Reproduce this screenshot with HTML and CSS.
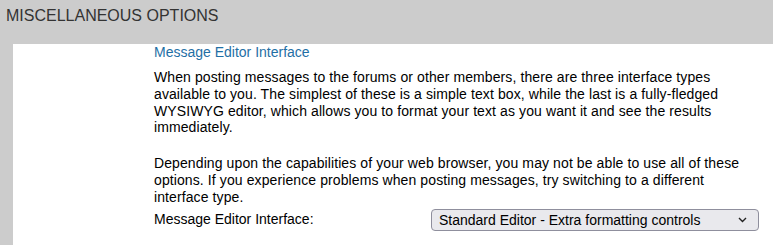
FILE: index.html
```html
<!DOCTYPE html>
<html lang="en">
<head>
    <meta charset="UTF-8">
    <title>Miscellaneous Options</title>
    <link rel="stylesheet" href="styles.css">
</head>
<body>
<div class="section-head">MISCELLANEOUS OPTIONS</div>
<div class="section-body">
    <div class="option">
        <div class="option-title">Message Editor Interface</div>
        <p class="option-desc">When posting messages to the forums or other members, there are three interface types available to you. The simplest of these is a simple text box, while the last is a fully-fledged WYSIWYG editor, which allows you to format your text as you want it and see the results immediately.</p>
        <p class="option-desc">Depending upon the capabilities of your web browser, you may not be able to use all of these options. If you experience problems when posting messages, try switching to a different interface type.</p>
        <div class="option-row">
            <label for="editor">Message Editor Interface:</label>
            <span class="select-wrap">
                <select id="editor" name="editor">
                    <option>Basic Editor - Simple text box</option>
                    <option selected>Standard Editor - Extra formatting controls</option>
                    <option>Enhanced Interface - Full WYSIWYG editing</option>
                </select>
                <svg class="select-arrow" width="9" height="6" viewBox="0 0 9 6">
                    <path d="M1 1 L4.5 4.5 L8 1" fill="none" stroke="#222" stroke-width="1.4"/>
                </svg>
            </span>
        </div>
    </div>
</div>
</body>
</html>
```

FILE: styles.css
```css
body {
    background-color: #cccccc;
    color: #000000;
    font-family: "Liberation Sans", Arial, sans-serif;
    font-size: 14px;
    margin: 0;
}

.section-head {
    color: #333333;
    font-size: 16px;
    padding: 7px 6px 0 6px;
    height: 44px;
    box-sizing: border-box;
}

.section-body {
    background-color: #ffffff;
    margin-left: 13px;
    padding: 0 14px 0 141px;
    height: 201px;
}

.option-title {
    color: #1f6fa5;
    line-height: 17px;
    margin-bottom: 8px;
}

.option-desc {
    margin: 0 0 19px 0;
    line-height: 16.8px;
    letter-spacing: 0.1px;
}

.option-desc + .option-desc {
    margin-bottom: 5px;
}

.option-row {
    display: flex;
    align-items: flex-start;
    line-height: 17px;
}

.option-row label {
    width: 277px;
    flex-shrink: 0;
}

.select-wrap {
    position: relative;
    display: block;
    margin-top: -2px;
}

.option-row select {
    appearance: none;
    display: block;
    width: 328px;
    height: 22px;
    padding: 0 24px 0 7px;
    font-family: "Liberation Sans", Arial, sans-serif;
    font-size: 14px;
    color: #000000;
    background-color: #e9e9ed;
    border: 1px solid #8f8f9d;
    border-radius: 4px;
}

.select-arrow {
    position: absolute;
    right: 12px;
    top: 8px;
    pointer-events: none;
}
```
